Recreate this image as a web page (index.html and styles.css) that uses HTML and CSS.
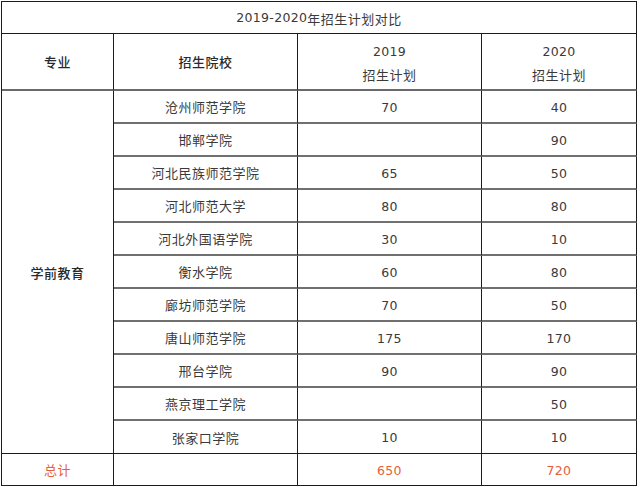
FILE: index.html
```html
<!DOCTYPE html>
<html lang="zh">
<head>
<meta charset="utf-8">
<title>2019-2020年招生计划对比</title>
<link rel="stylesheet" href="styles.css">
</head>
<body>
<div class="sheet">
  <div class="cell title"><span class="num">2019-2020</span>年招生计划对比</div>

  <div class="cell head strong">专业</div>
  <div class="cell head strong">招生院校</div>
  <div class="cell head two"><span class="num">2019</span><span>招生计划</span></div>
  <div class="cell head two"><span class="num">2020</span><span>招生计划</span></div>

  <div class="cell major strong">学前教育</div>

  <div class="cell">沧州师范学院</div><div class="cell num">70</div><div class="cell num">40</div>
  <div class="cell">邯郸学院</div><div class="cell num"></div><div class="cell num">90</div>
  <div class="cell">河北民族师范学院</div><div class="cell num">65</div><div class="cell num">50</div>
  <div class="cell">河北师范大学</div><div class="cell num">80</div><div class="cell num">80</div>
  <div class="cell">河北外国语学院</div><div class="cell num">30</div><div class="cell num">10</div>
  <div class="cell">衡水学院</div><div class="cell num">60</div><div class="cell num">80</div>
  <div class="cell">廊坊师范学院</div><div class="cell num">70</div><div class="cell num">50</div>
  <div class="cell">唐山师范学院</div><div class="cell num">175</div><div class="cell num">170</div>
  <div class="cell">邢台学院</div><div class="cell num">90</div><div class="cell num">90</div>
  <div class="cell">燕京理工学院</div><div class="cell num"></div><div class="cell num">50</div>
  <div class="cell last">张家口学院</div><div class="cell last num">10</div><div class="cell last num">10</div>

  <div class="cell total">总计</div>
  <div class="cell total"></div>
  <div class="cell total num">650</div>
  <div class="cell total num">720</div>
</div>
</body>
</html>
```

FILE: styles.css
```css
html, body {
  margin: 0;
  padding: 0;
  background: #ffffff;
}

body {
  font-family: "Noto Sans CJK SC", "Noto Sans", sans-serif;
  font-size: 13px;
  letter-spacing: 0.5px;
  color: #3a3a3a;
}

.num {
  font-family: "DejaVu Sans", "Noto Sans CJK SC", sans-serif;
  font-size: 12.5px;
  letter-spacing: 0.3px;
}

.sheet {
  display: grid;
  width: max-content;
  margin: 1px 0 0 1px;
  grid-template-columns: 112px 184px 184px 155px;
  grid-template-rows: 32px 57px repeat(11, 33px) 32px;
  border-top: 1px solid #1c1c1c;
  border-left: 1px solid #1c1c1c;
}

.cell {
  box-sizing: border-box;
  display: flex;
  align-items: center;
  justify-content: center;
  border-right: 1px solid #1c1c1c;
  border-bottom: 2px solid #707070;
  line-height: 1;
  white-space: nowrap;
}

.cell.num {
  padding-top: 3px;
}

.title {
  grid-column: 1 / span 4;
  border-bottom: 1px solid #1c1c1c;
  padding-top: 1px;
}

.head {
  border-bottom: 2px solid #6a6a6a;
}

.two {
  flex-direction: column;
  gap: 9px;
  padding-top: 4px;
}

.strong {
  font-weight: 500;
  color: #2a2a2a;
}

.major {
  grid-row: 3 / span 11;
  border-bottom: 1px solid #1c1c1c;
}

.last {
  border-bottom: 1px solid #1c1c1c;
}

.total {
  color: #e5603a;
  border-bottom: 1px solid #1c1c1c;
}
```
